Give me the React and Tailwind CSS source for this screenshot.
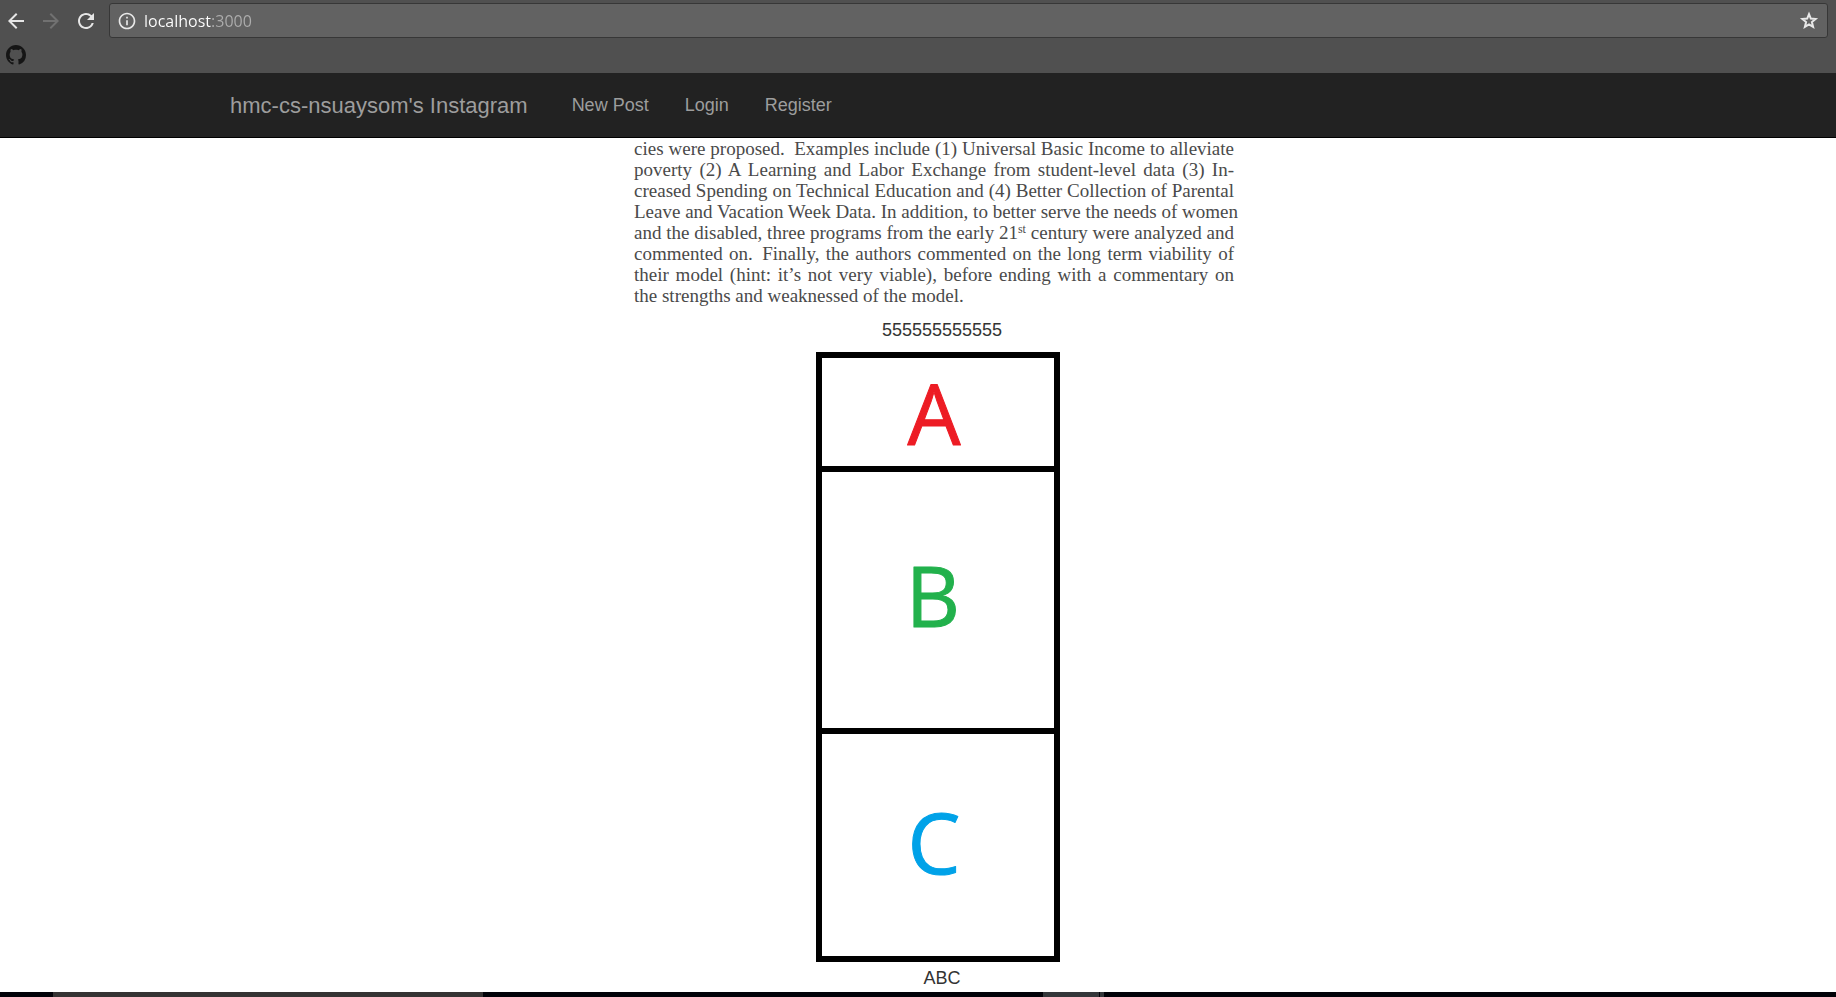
import { MdArrowBack, MdArrowForward, MdRefresh, MdInfoOutline } from "react-icons/md";

const abstractLines = [
  "cies were proposed.\u2002Examples include (1) Universal Basic Income to alleviate",
  "poverty (2) A Learning and Labor Exchange from student-level data (3) In-",
  "creased Spending on Technical Education and (4) Better Collection of Parental",
  "Leave and Vacation Week Data. In addition, to better serve the needs of women",
  <>
    and the disabled, three programs from the early 21
    <sup className="text-[12px] leading-none">st</sup> century were analyzed and
  </>,
  "commented on.\u2002Finally, the authors commented on the long term viability of",
  "their model (hint: it’s not very viable), before ending with a commentary on",
];

function GithubMark() {
  return (
    <svg width="20" height="20" viewBox="0 0 16 16" fill="currentColor" aria-hidden="true">
      <path d="M8 0C3.58 0 0 3.58 0 8c0 3.54 2.29 6.53 5.47 7.59.4.07.55-.17.55-.38 0-.19-.01-.82-.01-1.49-2.01.37-2.53-.49-2.69-.94-.09-.23-.48-.94-.82-1.13-.28-.15-.68-.52-.01-.53.63-.01 1.08.58 1.23.82.72 1.21 1.87.87 2.33.66.07-.52.28-.87.51-1.07-1.78-.2-3.64-.89-3.64-3.95 0-.87.31-1.59.82-2.15-.08-.2-.36-1.02.08-2.12 0 0 .67-.21 2.2.82.64-.18 1.32-.27 2-.27.68 0 1.36.09 2 .27 1.53-1.04 2.2-.82 2.2-.82.44 1.1.16 1.92.08 2.12.51.56.82 1.27.82 2.15 0 3.07-1.87 3.75-3.65 3.95.29.25.54.73.54 1.48 0 1.07-.01 1.93-.01 2.2 0 .21.15.46.55.38A8.013 8.013 0 0 0 16 8c0-4.42-3.58-8-8-8z" />
    </svg>
  );
}

function StarOutline() {
  return (
    <svg width="20" height="20" viewBox="0 0 20 20" fill="none" stroke="currentColor" strokeWidth="2" aria-hidden="true">
      <path d="M10 3.2 11.8 7.6 16.6 8 12.9 11.1 14.1 15.8 10 13.3 5.9 15.8 7.1 11.1 3.4 8 8.2 7.6Z" />
    </svg>
  );
}

function BrowserBar() {
  return (
    <header className="bg-[#505050]">
      <div className="flex items-center gap-[11px] pt-[3px] pr-2 pl-1">
        <button type="button" aria-label="Back" className="text-[#e6e6e6]">
          <MdArrowBack size={24} />
        </button>
        <button type="button" aria-label="Forward" className="text-[#717171]">
          <MdArrowForward size={24} />
        </button>
        <button type="button" aria-label="Reload" className="text-[#e6e6e6]">
          <MdRefresh size={24} />
        </button>
        <div className="flex h-[35px] flex-1 items-center rounded-[3px] border border-[#373737] bg-[#626262] pr-2 pl-[7px]">
          <MdInfoOutline size={20} className="text-[#e8e8e8]" />
          <input
            type="text"
            aria-label="Address"
            defaultValue="localhost:3000"
            className="ml-[7px] min-w-0 flex-1 bg-[linear-gradient(90deg,#ffffff_67px,#adadad_67px)] bg-clip-text font-['Open_Sans',sans-serif] text-[16px] text-transparent outline-none"
          />
          <button type="button" aria-label="Bookmark this page" className="text-[#e8e8e8]">
            <StarOutline />
          </button>
        </div>
      </div>
      <div className="flex h-[35px] items-start px-1.5 pt-[7px]">
        <a href="#github" aria-label="GitHub" className="text-[#151515]">
          <GithubMark />
        </a>
      </div>
    </header>
  );
}

function SiteNav() {
  return (
    <nav className="flex h-[65px] items-center border-b border-black bg-[#222222] pl-[230px] text-[#9d9d9d]">
      <a href="#home" className="text-[22px]">
        hmc-cs-nsuaysom&apos;s Instagram
      </a>
      <div className="ml-11 flex gap-9 text-[18px]">
        <a href="#new">New Post</a>
        <a href="#login">Login</a>
        <a href="#register">Register</a>
      </div>
    </nav>
  );
}

function Diagram() {
  return (
    <svg
      width="252"
      height="610"
      viewBox="0 0 252 610"
      role="img"
      aria-label="Stack of three blocks"
      className="font-['Open_Sans',sans-serif] text-[84px]"
    >
      <g fill="none" stroke="#000" strokeWidth="6">
        <rect x="3" y="3" width="238" height="604" />
        <path d="M0 117H244M0 379H244" />
      </g>
      <g textAnchor="middle" strokeWidth="1" strokeLinejoin="round">
        <text x="118" y="93" fill="#ed1c24" stroke="#ed1c24">A</text>
        <text x="117" y="275" fill="#22b14c" stroke="#22b14c">B</text>
        <text x="118" y="522" fill="#00a2e8" stroke="#00a2e8">C</text>
      </g>
    </svg>
  );
}

function Taskbar() {
  return (
    <footer className="flex h-[5px] bg-[#010208]">
      <div className="ml-[53px] w-[430px] bg-[#353333]" />
      <div className="ml-[560px] w-14 bg-[#34373a]" />
      <div className="ml-px w-1 bg-[#34373a]" />
    </footer>
  );
}

export default function App() {
  return (
    <div className="flex min-h-screen flex-col bg-white font-['Liberation_Sans',Arial,sans-serif]">
      <BrowserBar />
      <SiteNav />
      <main className="flex flex-1 flex-col items-center pl-12 text-[18px] leading-6 text-[#333333]">
        <article className="flex flex-col items-center">
          <div className="w-[616px] pr-4 font-['Liberation_Serif',serif] text-[19px] leading-[21px] whitespace-nowrap text-[#4a4a4a]">
            {abstractLines.map((line, i) => (
              <p key={i} className="h-[21px] [text-align-last:justify]">
                {line}
              </p>
            ))}
            <p className="h-[21px]">the strengths and weaknessed of the model.</p>
          </div>
          <p className="mt-3">555555555555</p>
        </article>
        <article className="mt-[10px] flex flex-col items-center">
          <Diagram />
          <p className="mt-1">ABC</p>
        </article>
      </main>
      <Taskbar />
    </div>
  );
}
